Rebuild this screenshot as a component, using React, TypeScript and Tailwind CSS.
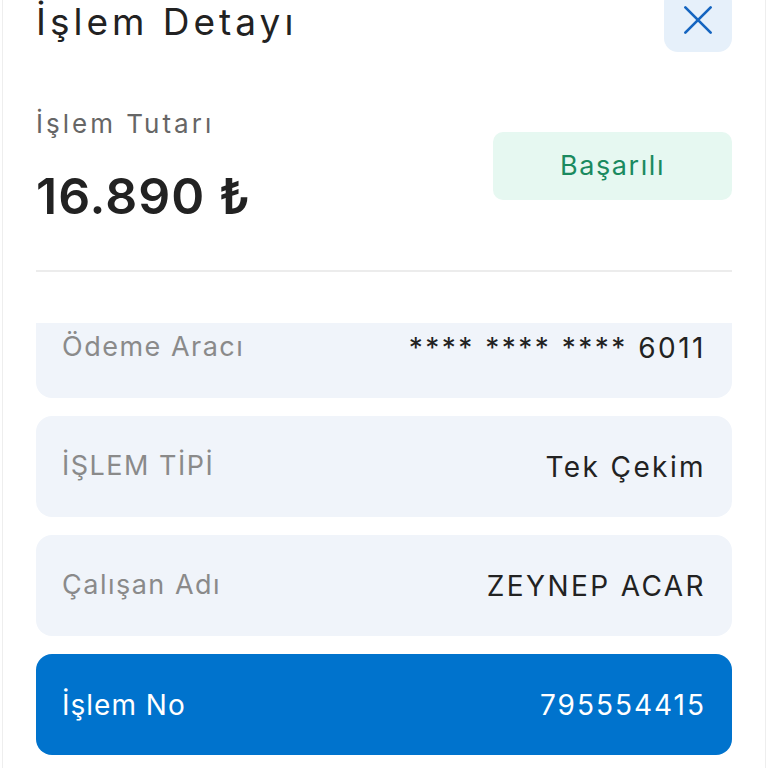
const rows = [
  { label: 'Ödeme Aracı', value: '**** **** **** 6011', labelTrack: 'tracking-[1.5px]', valueTrack: 'tracking-[2.5px]' },
  { label: 'İŞLEM TİPİ', value: 'Tek Çekim', labelTrack: 'tracking-[1.5px]', valueTrack: 'tracking-[2.4px]' },
  { label: 'Çalışan Adı', value: 'ZEYNEP ACAR', labelTrack: 'tracking-[1.5px]', valueTrack: 'tracking-[2.4px]' },
]

export default function App() {
  return (
    <div className="h-[768px] w-[768px] overflow-hidden bg-white px-[2px]" style={{ fontFamily: 'Inter, "Noto Sans", sans-serif' }}>
      <div className="flex h-full flex-col border-x border-[#eeeeee] bg-white px-[33px]">
        {/* Header */}
        <div className="-mt-[12px] flex items-start justify-between">
          <h1 className="pt-[8px] text-[37px] leading-[52px] tracking-[4px] text-[#222]">İşlem Detayı</h1>
          <button className="flex h-[64px] w-[68px] items-center justify-center rounded-[14px] bg-[#e6f0fa] text-[#1565c0]">
            <svg width="38" height="38" viewBox="0 0 24 24" fill="none" stroke="currentColor" strokeWidth="1.7" strokeLinecap="round">
              <path d="M4 4l16 16M20 4L4 20" />
            </svg>
          </button>
        </div>

        {/* Amount */}
        <div className="mt-[56px] flex items-start justify-between">
          <div>
            <p className="text-[26px] leading-[32px] tracking-[3px] text-[#666]">İşlem Tutarı</p>
            <p className="mt-[26px] text-[50px] font-semibold leading-[60px] tracking-[1px] text-[#222]">16.890 ₺</p>
          </div>
          <div className="mt-[24px] flex h-[68px] w-[239px] items-center justify-center rounded-[10px] bg-[#e6f8f1] text-[27px] tracking-[1.6px] text-[#1a8a5f]">
            Başarılı
          </div>
        </div>

        <div className="mt-[44px] h-[2px] shrink-0 bg-[#ececec]" />

        {/* Rows */}
        <div className="mt-[51px] h-[450px] shrink-0 overflow-hidden">
          <div className="-mt-[26px] flex flex-col gap-[18px]">
            {rows.map((r) => (
              <div key={r.label} className="flex h-[101px] items-center justify-between rounded-[16px] bg-[#f0f4fa] px-[26px]">
                <span className={`text-[27px] text-[#8a8a8a] ${r.labelTrack}`}>{r.label}</span>
                <span className={`text-[28px] text-[#222] ${r.valueTrack}`}>{r.value}</span>
              </div>
            ))}
            <div className="flex h-[101px] items-center justify-between rounded-[16px] bg-[#0073cd] px-[26px] text-white">
              <span className="text-[28px] tracking-[1px]">İşlem No</span>
              <span className="text-[28px] tracking-[2px]">795554415</span>
            </div>
          </div>
        </div>
      </div>
    </div>
  )
}
